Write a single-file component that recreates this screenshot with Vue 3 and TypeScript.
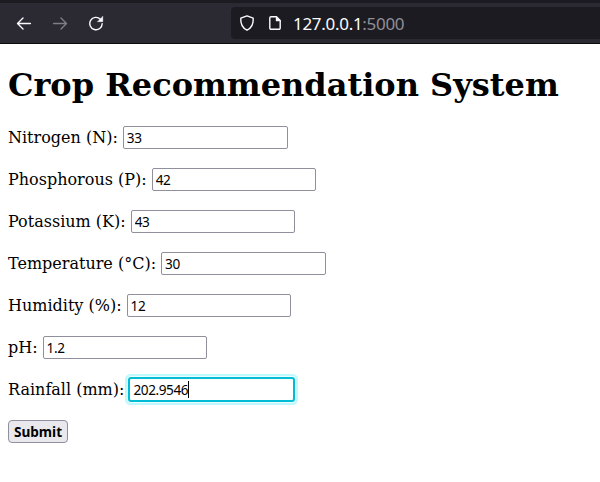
<script setup lang="ts">
import { reactive } from 'vue'

interface Field {
  id: string
  label: string
  value: string
  active?: boolean
}

const fields = reactive<Field[]>([
  { id: 'nitrogen', label: 'Nitrogen (N):', value: '33' },
  { id: 'phosphorous', label: 'Phosphorous (P):', value: '42' },
  { id: 'potassium', label: 'Potassium (K):', value: '43' },
  { id: 'temperature', label: 'Temperature (°C):', value: '30' },
  { id: 'humidity', label: 'Humidity (%):', value: '12' },
  { id: 'ph', label: 'pH:', value: '1.2' },
  { id: 'rainfall', label: 'Rainfall (mm):', value: '202.9546', active: true },
])
</script>

<template>
  <div class="window">
    <header class="toolbar">
      <nav class="nav">
        <svg class="icon" viewBox="0 0 16 16"><path d="M14.4 8.5H1.8M7 3L1.5 8.5L7 14" /></svg>
        <svg class="icon disabled" viewBox="0 0 16 16"><path d="M1.6 8.5h12.6M9 3L14.5 8.5L9 14" /></svg>
        <svg class="icon" viewBox="0 0 16 16">
          <path d="M12.4 4.2A6.2 6.2 0 1 0 14.2 8.6" />
          <path class="solid" d="M14.8 1.4V6.7H9.6z" />
        </svg>
      </nav>
      <div class="address">
        <svg class="icon" viewBox="0 0 16 16"><path d="M8 .9L14.2 3.2C14.6 8.6 12.2 13 8 15.2C3.8 13 1.4 8.6 1.8 3.2Z" /></svg>
        <svg class="icon page" viewBox="0 0 16 16">
          <path d="M9.5 1.7H4A1.2 1.2 0 0 0 2.8 2.9v10.2A1.2 1.2 0 0 0 4 14.3h8a1.2 1.2 0 0 0 1.2-1.2V5.5z" />
          <path class="solid" d="M9 1.5v4.6h4.7z" />
        </svg>
        <span class="url">127.0.0.1<span class="port">:5000</span></span>
      </div>
    </header>

    <main class="content">
      <h1>Crop Recommendation System</h1>
      <form @submit.prevent>
        <div v-for="field in fields" :key="field.id" class="row">
          <label :for="field.id">{{ field.label }}</label>
          <span class="control" :class="{ active: field.active }">
            <input :id="field.id" v-model="field.value" type="text" />
            <i v-if="field.active" class="caret"></i>
          </span>
        </div>
        <button type="submit">Submit</button>
      </form>
    </main>
  </div>
</template>

<style>
body {
  background: #fff;
}
</style>

<style scoped>
.window {
  box-sizing: border-box;
  height: 482px;
  overflow: hidden;
  background: #fff;
  color: #000;
  font-family: "DejaVu Serif", serif;
  font-size: 16px;
}
.toolbar {
  box-sizing: border-box;
  display: flex;
  height: 44px;
  padding-top: 4px;
  border-top: 3px solid #1c1b22;
  border-bottom: 1px solid #0c0c0d;
  background: #2b2a33;
}
.nav {
  display: flex;
  align-items: center;
  gap: 20px;
  width: 215px;
  height: 32px;
  padding-left: 16px;
}
.icon {
  flex: none;
  width: 16px;
  height: 16px;
  fill: none;
  stroke: #fbfbfe;
  stroke-width: 1.4;
  stroke-linecap: round;
  stroke-linejoin: round;
}
.disabled {
  opacity: 0.4;
}
.solid {
  fill: #fbfbfe;
  stroke-width: 0.4;
}
.address {
  box-sizing: border-box;
  display: flex;
  flex: 1;
  align-items: center;
  height: 32px;
  padding-left: 8px;
  border-radius: 4px 0 0 4px;
  background: #1c1b22;
}
.page {
  margin-left: 12px;
}
.url {
  margin-left: 10px;
  padding-top: 2px;
  color: #fbfbfe;
  font: 17px/24px "Noto Sans", sans-serif;
  letter-spacing: -0.3px;
}
.port {
  color: #8f8f96;
}
.content {
  padding: 22px 8px 0;
}
h1 {
  margin: 0 0 22px;
  font-size: 32px;
  line-height: 38px;
  font-weight: bold;
  white-space: nowrap;
}
.row {
  display: flex;
  height: 23px;
  margin-bottom: 19px;
}
label {
  margin-right: 5px;
  line-height: 23px;
  white-space: nowrap;
}
.control {
  position: relative;
  display: flex;
}
input {
  box-sizing: border-box;
  width: 164.7px;
  height: 23px;
  margin: 0;
  padding: 0 3px 1px;
  border: 1px solid #8f8f9d;
  border-radius: 2px;
  outline: none;
  background: #fff;
  color: #000;
  font: 13.6px/18px "Noto Sans", sans-serif;
  letter-spacing: -0.4px;
}
.active input {
  border-color: #00bcd4;
  box-shadow: 0 0 0 1px #00bcd4, 0 0 0 2px #eaffff, 0 0 0 4px #bff8ff;
}
.caret {
  position: absolute;
  top: 3px;
  left: 59px;
  width: 1px;
  height: 17px;
  background: #000;
}
button {
  box-sizing: border-box;
  width: 60px;
  height: 23px;
  margin: 0;
  padding: 0;
  border: 1px solid #8f8f9d;
  border-radius: 4px;
  background: #e9e9ed;
  color: #000;
  font: bold 13.6px/20px "Noto Sans", sans-serif;
}
</style>
